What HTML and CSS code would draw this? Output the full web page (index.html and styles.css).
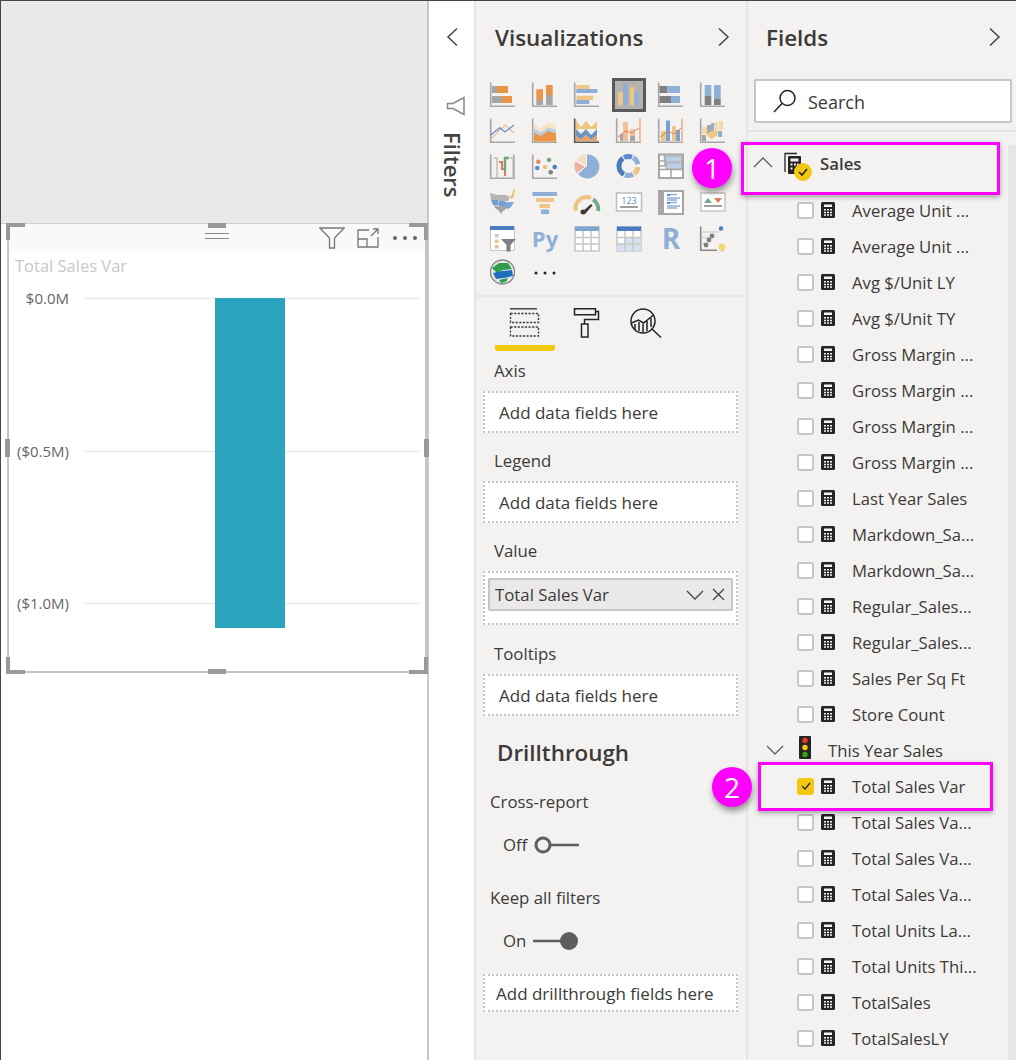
FILE: index.html
```html
<!DOCTYPE html>
<html lang="en">
<head>
    <meta charset="UTF-8">
    <title>Power BI report - Total Sales Var</title>
    <link rel="stylesheet" href="styles.css">
</head>
<body>
    <svg class="defs" width="0" height="0">
        <symbol id="calc" viewBox="0 0 14 16">
            <rect width="14" height="16" rx="1.5" fill="#252423"/>
            <rect x="3" y="2.5" width="8" height="2.5" fill="#f3f2f1"/>
            <path d="M3 7h2v1.5H3zM6 7h2v1.5H6zM9 7h2v1.5H9zM3 9.7h2v1.5H3zM6 9.7h2v1.5H6zM9 9.7h2v1.5H9zM3 12.3h2v1.5H3zM6 12.3h2v1.5H6zM9 12.3h2v1.5H9z" fill="#f3f2f1"/>
        </symbol>
        <symbol id="axis" viewBox="0 0 28 28">
            <path d="M1.7 1.5V25.3H26" fill="none" stroke="#a6a6a6" stroke-width="1.6"/>
        </symbol>
    </svg>

    <div class="page">
        <div class="canvas">
            <div class="canvas-top"></div>
            <div class="visual">
                <div class="visual-head">
                    <svg class="grip" width="24" height="6"><path d="M0 .5h24M0 5.5h24" stroke="#8a8a8a"/></svg>
                    <svg class="head-icon filter-icon" width="26" height="22" viewBox="0 0 26 22"><path d="M1 1h24l-9.500 10v10h-5V11z" fill="none" stroke="#777" stroke-width="1.300"/></svg>
                    <svg class="head-icon expand-icon" width="22" height="20" viewBox="0 0 22 20"><path d="M12 2H1v17h20V9M1 11h9v8M14 8l7-7M16 1h5v5" fill="none" stroke="#777" stroke-width="1.300"/></svg>
                    <span class="head-dots">
                        <i></i><i></i><i></i>
                    </span>
                </div>
                <div class="visual-title">Total Sales Var</div>
                <svg class="chart" width="414" height="390" viewBox="0 0 414 390">
                    <path d="M74 21.500H410M74 174.500H410M74 326.500H410" stroke="#e9e9e9" stroke-width="1.500"/>
                    <rect x="205" y="21" width="70" height="330" fill="#2ba3bf"/>
                    <g class="axis-label">
                        <text x="59" y="27">$0.0M</text>
                        <text x="59" y="180">($0.5M)</text>
                        <text x="59" y="332">($1.0M)</text>
                    </g>
                </svg>
                <i class="handle corner tl"></i>
                <i class="handle corner tr"></i>
                <i class="handle corner bl"></i>
                <i class="handle corner br"></i>
                <i class="handle side top"></i>
                <i class="handle side bottom"></i>
                <i class="handle upright left"></i>
                <i class="handle upright right"></i>
            </div>
        </div>

        <div class="filters">
            <svg class="chev" width="12" height="20" viewBox="0 0 12 20"><path d="M11 1.500 2 10l9 8.500" fill="none" stroke="#444" stroke-width="1.500"/></svg>
            <svg class="megaphone" width="20" height="20" viewBox="0 0 20 20"><path d="M18 1.500V18.500L7 12.500H1.500V7.500H7z" fill="none" stroke="#8a8886" stroke-width="1.500"/></svg>
            <div class="filters-label">Filters</div>
        </div>

        <div class="viz">
            <div class="pane-head">
                <h2 class="pane-title">Visualizations</h2>
                <svg class="chev" width="12" height="20" viewBox="0 0 12 20"><path d="M1 1.500 10 10l-9 8.500" fill="none" stroke="#444" stroke-width="1.500"/></svg>
            </div>

            <div class="viz-grid">
                <!-- row 1 -->
                <svg viewBox="0 0 28 28"><use href="#axis"/><path d="M3 5h5v7H3zM3 15h10v7H3z" fill="#a6a6a6"/><path d="M8 5h11v7H8zM13 15h10v7H13z" fill="#e99546"/></svg>
                <svg viewBox="0 0 28 28"><use href="#axis"/><path d="M5.300 8.300H12V19H5.300zM15 4h6.700v10H15z" fill="#e99546"/><path d="M5.300 19H12v5H5.300zM15 14h6.700v10H15z" fill="#a6a6a6"/></svg>
                <svg viewBox="0 0 28 28"><use href="#axis"/><path d="M3.300 4h13v4h-13zM3.300 14.700h17v4.300h-17z" fill="#eec788"/><path d="M3.300 8h21v4h-21zM3.300 19h13v4h-13z" fill="#8fb0d6"/></svg>
                <svg class="viz-selected" viewBox="0 0 28 28"><path d="M3 10.700h5V24H3zM14.700 6.300h4.600V24h-4.600z" fill="#eec788"/><path d="M8 2.300h5V24H8zM19.300 10.700h4.400V24h-4.400z" fill="#8fb0d6"/></svg>
                <svg viewBox="0 0 28 28"><use href="#axis"/><path d="M2.500 5h8v7h-8zM2.500 15h11.500v7H2.500z" fill="#7f7f7f"/><path d="M10.500 5H23v7H10.500zM14 15h9v7h-9z" fill="#8fb0d6"/></svg>
                <svg viewBox="0 0 28 28"><use href="#axis"/><path d="M5.700 4h6.600v10.700H5.700zM15 4h6.700v14H15z" fill="#8fb0d6"/><path d="M5.700 14.700h6.600V24H5.700zM15 18h6.700v6H15z" fill="#7f7f7f"/></svg>

                <!-- row 2 -->
                <svg viewBox="0 0 28 28"><use href="#axis"/><path d="M2.700 21.300 10.700 13l6-5L25 16.300" fill="none" stroke="#efb79f" stroke-width="1.200"/><path d="M1.700 18l9-7.300L16 15l9-7" fill="none" stroke="#5b8dc8" stroke-width="1.200"/></svg>
                <svg viewBox="0 0 28 28"><use href="#axis"/><path d="M3 7l7 4 7-6 8 3v8H3z" fill="#f6e3c8"/><path d="M3 11.500l7 4 7-5 8 2.500v6H3z" fill="#b9cde3"/><path d="M3 16l7 3 7-5 8 2.500V24.500H3z" fill="#e99546"/></svg>
                <svg viewBox="0 0 28 28"><path d="M1.700 1.500V25.300H26" fill="none" stroke="#555" stroke-width="1.600"/><path d="M3 3l5 7 5-6 5 6 6-6v8H3z" fill="#eec27f"/><path d="M3 12l5 5 5-5 5 6 6-6v6l-6 5-5-5-5 5-5-4z" fill="#6f93bf"/><path d="M3 19l5 4 5-5 5 5 6-5v6H3z" fill="#efa25f"/></svg>
                <svg viewBox="0 0 28 28"><use href="#axis"/><path d="M25 1.500v24" stroke="#efb08a" stroke-width="1.600"/><path d="M5 17h5v7H5zM15 19h5v5h-5z" fill="#a6a6a6"/><path d="M8 5h5v19H8z" fill="#f3bf9a"/><path d="M15 12h5v7h-5z" fill="#f3bf9a"/><path d="M3 20l8-6 6 2 7-5" fill="none" stroke="#e07f5f" stroke-width="1"/></svg>
                <svg viewBox="0 0 28 28"><use href="#axis"/><path d="M25 1.500v24" stroke="#efb08a" stroke-width="1.600"/><path d="M4 14h5v10H4zM15 9h4v15h-4z" fill="#eec788"/><path d="M9 3.500h4V24H9zM19 13h4v11h-4z" fill="#7aa2d2"/><path d="M3 20l8-6 6 3 7-6" fill="none" stroke="#e07f5f" stroke-width="1"/></svg>
                <svg viewBox="0 0 28 28"><use href="#axis"/><path d="M3 10h5v7H3zM15 5h4v8h-4zM20 4h4v9h-4z" fill="#f4d8ae"/><path d="M8 8h4v9H8zM3 18h4v6H3z" fill="#a6a6a6"/><path d="M12 6h3v8h-3zM19 14h4v6h-4z" fill="#8fb0d6"/><path d="M7 17l5 5 6-3 1-6-7 1z" fill="#eec788"/></svg>

                <!-- row 3 -->
                <svg viewBox="0 0 28 28"><use href="#axis"/><path d="M25 1.500v24" stroke="#a6a6a6" stroke-width="1.600"/><path d="M5 5h3v19M21 5h3v19" fill="none" stroke="#bdbdbd" stroke-width="1.500"/><path d="M10 9h3v7h3v7" fill="none" stroke="#e0765a" stroke-width="2"/><path d="M16 18v-13h4" fill="none" stroke="#6fa878" stroke-width="2.500"/></svg>
                <svg viewBox="0 0 28 28"><use href="#axis"/><circle cx="7.300" cy="8.700" r="2.300" fill="#e0876f"/><circle cx="18" cy="7" r="2.300" fill="#71a98d"/><circle cx="14" cy="14" r="2.300" fill="#eec27f"/><circle cx="6.300" cy="15" r="2.300" fill="#5b8dc8"/><circle cx="23.700" cy="14" r="2.300" fill="#4a7dbd"/><circle cx="19.700" cy="19.300" r="2.300" fill="#7f7f7f"/></svg>
                <svg viewBox="0 0 28 28"><path d="M14 13V1.500A12 12 0 1 1 5 21z" fill="#8fb0d6"/><path d="M13 12V1.500A12 12 0 0 0 3 7z" fill="#f3dfc0"/><path d="M12 14 2.500 8.500A12 12 0 0 0 3.500 20z" fill="#efb0a0"/></svg>
                <svg viewBox="0 0 28 28"><g fill="none" stroke-width="5"><circle cx="13.500" cy="13" r="9.500" stroke="#f3f2f1"/><circle cx="13.500" cy="13" r="9.500" pathLength="100" stroke="#eec27f" stroke-dasharray="13 87" stroke-dashoffset="-2"/><circle cx="13.500" cy="13" r="9.500" pathLength="100" stroke="#8fb0d6" stroke-dasharray="14 86" stroke-dashoffset="-17"/><circle cx="13.500" cy="13" r="9.500" pathLength="100" stroke="#4a7dbd" stroke-dasharray="32 68" stroke-dashoffset="-33"/><circle cx="13.500" cy="13" r="9.500" pathLength="100" stroke="#5b8dc8" stroke-dasharray="14 86" stroke-dashoffset="-67"/><circle cx="13.500" cy="13" r="9.500" pathLength="100" stroke="#8fb0d6" stroke-dasharray="14 86" stroke-dashoffset="-83"/></g></svg>
                <svg viewBox="0 0 28 28"><rect x="2" y="1.500" width="24" height="23.500" fill="#fff" stroke="#a6a6a6" stroke-width="2"/><path d="M7.500 2v6M2 8h6v5H2zM2 16.500h24M14 17v8" fill="none" stroke="#a6a6a6" stroke-width="1.500"/><path d="M9 3h16v6H9zM9 10h16v6H9z" fill="#bcd0e8" stroke="#a6a6a6"/></svg>
                <svg viewBox="0 0 28 28"></svg>

                <!-- row 4 -->
                <svg viewBox="0 0 28 28"><path d="M1 4l8 2h8l4 2-2 4H2z" fill="#b5b5b5"/><path d="M21 7l2-1 1-5 2-1-1 8-3 2z" fill="#eec27f"/><path d="M2 11h7l1 5H4zM10 12h6v5h-6z" fill="#6f9dd0"/><path d="M16 13h9l-3 5-3 2-3-1z" fill="#7fa8d6"/><path d="M5 16l5 1h6l1 3-3 2-2 3-3-4-3-2z" fill="#a6a6a6"/></svg>
                <svg viewBox="0 0 28 28"><path d="M1.500 3H26v4H1.500z" fill="#8fb0d6"/><path d="M5 9h18v4H5z" fill="#eec788"/><path d="M8.500 15H19v4H8.500z" fill="#eec788"/><path d="M10 20.500h8V25h-8z" fill="#8fb0d6"/></svg>
                <svg viewBox="0 0 28 28"><path d="M3 22A11 11 0 0 1 18 9" fill="none" stroke="#eec27f" stroke-width="4"/><path d="M20 10.500A11 11 0 0 1 25 22" fill="none" stroke="#6fa88f" stroke-width="4"/><path d="M9 23l9-8 1.500 1.500L12 25z" fill="#3b3a39"/><circle cx="10" cy="23" r="2.500" fill="#3b3a39"/></svg>
                <svg viewBox="0 0 28 28"><rect x="1.500" y="4" width="25" height="18" fill="#fff" stroke="#bdbdbd" stroke-width="1.500"/><text class="icon-card" x="14" y="14.500">123</text><path d="M5 18h18" stroke="#7f7f7f" stroke-width="1.500"/></svg>
                <svg viewBox="0 0 28 28"><rect x="2" y="2" width="24" height="23" fill="#fff" stroke="#a6a6a6" stroke-width="2"/><path d="M3 3h4v21H3z" fill="#a6a6a6"/><path d="M10 5h3v2h-3zM10 13h3v2h-3z" fill="#5b8dc8"/><path d="M13 5.500h7M10 9h13M10 11h10M13 13.500h7M10 17h13M10 19h10" stroke="#8fb0d6" stroke-width="1.300"/></svg>
                <svg viewBox="0 0 28 28"><rect x="2" y="4" width="24" height="18" fill="#fff" stroke="#c8c6c4" stroke-width="1.500"/><path d="M5 14l4-5 4 5z" fill="#6fa88f"/><path d="M15 9h8l-4 5z" fill="#e0765a"/><path d="M5 17h18" stroke="#7f7f7f" stroke-width="1.500"/></svg>

                <!-- row 5 -->
                <svg viewBox="0 0 28 28"><path d="M1.500 1.500h24v24h-24z" fill="#fff" stroke="#c8c6c4" stroke-width="1"/><path d="M1 1h24v4H1z" fill="#4a7dbd"/><path d="M6 9h3.500v3.500H6z" fill="#b9cde3"/><path d="M6 14.500h3.500V18H6z" fill="#eec27f"/><path d="M6 20h3.500v3.500H6z" fill="#efb8a8"/><path d="M12 14h15l-5.500 6v6.500h-4V20z" fill="#7f7f7f"/></svg>
                <svg viewBox="0 0 28 28"><text class="icon-letter py" x="14" y="22">Py</text></svg>
                <svg viewBox="0 0 28 28"><rect x="2" y="2" width="24" height="24" fill="#fff" stroke="#c8c6c4" stroke-width="1.500"/><path d="M2 1.500h24V6H2z" fill="#7ba3d0"/><path d="M10 6v20M18 6v20M2 12.500h24M2 19h24" stroke="#c8c6c4" stroke-width="1.500"/></svg>
                <svg viewBox="0 0 28 28"><rect x="2" y="2" width="24" height="24" fill="#fff" stroke="#c8c6c4" stroke-width="1.500"/><path d="M2 1.500h24V6H2z" fill="#4a7dbd"/><path d="M10 13h16v13H10zM2 19h8v7H2z" fill="#d5e2f0"/><path d="M10 6v20M18 6v20M2 12.500h24M2 19h24" stroke="#c8c6c4" stroke-width="1.500"/></svg>
                <svg viewBox="0 0 28 28"><text class="icon-letter r" x="14" y="24">R</text></svg>
                <svg viewBox="0 0 28 28"><path d="M1.700 1.500V25.300H18" fill="none" stroke="#8a8886" stroke-width="1.600"/><path d="M2 7h18M2 13h10M2 19h7" stroke="#c8c6c4"/><circle cx="22" cy="3.500" r="2.200" fill="#4a7dbd"/><circle cx="13" cy="11" r="2.400" fill="#7f7f7f"/><circle cx="10" cy="15" r="2.400" fill="#7f7f7f"/><circle cx="7" cy="20" r="2.400" fill="#7f7f7f"/><circle cx="23" cy="22" r="3.500" fill="#f6d67a"/><path d="M21.500 26h3" stroke="#c8c6c4" stroke-width="1.500"/></svg>

                <!-- row 6 -->
                <svg class="viz-last" viewBox="0 0 28 28"><circle cx="13.500" cy="13" r="12" fill="#e9e9e9" stroke="#8a8886" stroke-width="1.300"/><path d="M3 9l7-5 9 0 4 6-9 1-6 3z" fill="#2f9e4f"/><path d="M4 14l9-2 10-1 1 6-9 2-8 1z" fill="#1f6fc0"/><path d="M10 21l9-2-2 4-5 1z" fill="#2f9e4f"/></svg>
                <svg class="viz-last" viewBox="0 0 28 28"><g fill="#252423"><circle cx="5" cy="14" r="1.500"/><circle cx="14" cy="14" r="1.500"/><circle cx="23" cy="14" r="1.500"/></g></svg>
            </div>

            <div class="tabs">
                <div class="tab tab-active">
                    <svg width="32" height="30" viewBox="0 0 32 30"><path d="M1 .8h27" stroke="#3b3a39" stroke-width="1.400"/><path d="M1.500 5.500h28v9h-28zM1.500 19h28v9h-28z" fill="none" stroke="#3b3a39" stroke-width="1.400" stroke-dasharray="2.200 1.400"/></svg>
                </div>
                <div class="tab">
                    <svg width="28" height="30" viewBox="0 0 28 30"><path d="M2.500.8h21v6h-21zM23.500 3.500h3v8H12.500V16M9.500 16h6.500v13H9.500z" fill="none" stroke="#252423" stroke-width="1.500"/></svg>
                </div>
                <div class="tab tab-analytics">
                    <svg width="32" height="30" viewBox="0 0 32 30"><circle cx="13" cy="13" r="12" fill="none" stroke="#252423" stroke-width="1.500"/><path d="M1.500 15l7-3 5 3 10-8" fill="none" stroke="#252423" stroke-width="1.500"/><path d="M5 16v6M9 14v9M13 16v8M17 13v10M21 10v9M22 21l9 8.500" fill="none" stroke="#252423" stroke-width="1.500"/></svg>
                </div>
            </div>

            <div class="well-group well-first">
                <div class="well-label">Axis</div>
                <div class="well">Add data fields here</div>
            </div>
            <div class="well-group">
                <div class="well-label">Legend</div>
                <div class="well">Add data fields here</div>
            </div>
            <div class="well-group">
                <div class="well-label">Value</div>
                <div class="well well-filled">
                    <div class="chip">
                        <span class="chip-name">Total Sales Var</span>
                        <svg width="18" height="10" viewBox="0 0 18 10"><path d="M1 1l8 8 8-8" fill="none" stroke="#444" stroke-width="1.300"/></svg>
                        <svg width="13" height="13" viewBox="0 0 13 13"><path d="M1 1l11 11M12 1 1 12" fill="none" stroke="#444" stroke-width="1.300"/></svg>
                    </div>
                </div>
            </div>
            <div class="well-group well-tooltips">
                <div class="well-label">Tooltips</div>
                <div class="well">Add data fields here</div>
            </div>

            <h2 class="pane-title drill-title">Drillthrough</h2>
            <div class="drill-label">Cross-report</div>
            <div class="toggle-row">
                <span>Off</span>
                <svg class="toggle-off" width="45" height="18" viewBox="0 0 45 18"><circle cx="9" cy="9" r="7" fill="none" stroke="#605e5c" stroke-width="3"/><path d="M17 9h28" stroke="#605e5c" stroke-width="2.500"/></svg>
            </div>
            <div class="drill-label keep-label">Keep all filters</div>
            <div class="toggle-row">
                <span>On</span>
                <svg class="toggle-on" width="46" height="18" viewBox="0 0 46 18"><path d="M0 9h30" stroke="#605e5c" stroke-width="2.500"/><circle cx="36" cy="9" r="9" fill="#605e5c"/></svg>
            </div>
            <div class="well well-drill">Add drillthrough fields here</div>
        </div>

        <div class="fields">
            <div class="pane-head fields-head">
                <h2 class="pane-title">Fields</h2>
                <svg class="chev" width="12" height="20" viewBox="0 0 12 20"><path d="M1 1.500 10 10l-9 8.500" fill="none" stroke="#444" stroke-width="1.500"/></svg>
            </div>
            <div class="search">
                <svg width="24" height="24" viewBox="0 0 24 24"><circle cx="14.500" cy="9" r="7.500" fill="none" stroke="#252423" stroke-width="1.500"/><path d="M9 14.500 1 23" stroke="#252423" stroke-width="1.500"/></svg>
                <span class="search-text">Search</span>
            </div>

            <div class="field-list">
                <div class="table-row">
                    <svg width="20" height="12" viewBox="0 0 20 12"><path d="M1 11 10 2l9 9" fill="none" stroke="#605e5c" stroke-width="1.300"/></svg>
                    <span class="table-icon">
                        <svg width="20" height="24" viewBox="0 0 20 24"><path d="M1 20V1.500h12" fill="none" stroke="#252423" stroke-width="1.300"/><rect x="4" y="4" width="13" height="18" rx="1" fill="#252423"/><rect x="6.500" y="6.500" width="8" height="3" fill="#f3f2f1"/><path d="M6.500 11.500h2v2h-2zM10 11.500h2v2h-2zM13 11.500h1.500v2H13zM6.500 15.500h2v2h-2z" fill="#f3f2f1"/></svg>
                        <span class="table-check">
                            <svg width="10" height="8" viewBox="0 0 10 8"><path d="M1 4l3 3 5-6" fill="none" stroke="#252423" stroke-width="1.600"/></svg>
                        </span>
                    </span>
                    <strong>Sales</strong>
                </div>

                <div class="field"><i class="box"></i><svg class="calc"><use href="#calc"/></svg><span>Average Unit ...</span></div>
                <div class="field"><i class="box"></i><svg class="calc"><use href="#calc"/></svg><span>Average Unit ...</span></div>
                <div class="field"><i class="box"></i><svg class="calc"><use href="#calc"/></svg><span>Avg $/Unit LY</span></div>
                <div class="field"><i class="box"></i><svg class="calc"><use href="#calc"/></svg><span>Avg $/Unit TY</span></div>
                <div class="field"><i class="box"></i><svg class="calc"><use href="#calc"/></svg><span>Gross Margin ...</span></div>
                <div class="field"><i class="box"></i><svg class="calc"><use href="#calc"/></svg><span>Gross Margin ...</span></div>
                <div class="field"><i class="box"></i><svg class="calc"><use href="#calc"/></svg><span>Gross Margin ...</span></div>
                <div class="field"><i class="box"></i><svg class="calc"><use href="#calc"/></svg><span>Gross Margin ...</span></div>
                <div class="field"><i class="box"></i><svg class="calc"><use href="#calc"/></svg><span>Last Year Sales</span></div>
                <div class="field"><i class="box"></i><svg class="calc"><use href="#calc"/></svg><span>Markdown_Sa...</span></div>
                <div class="field"><i class="box"></i><svg class="calc"><use href="#calc"/></svg><span>Markdown_Sa...</span></div>
                <div class="field"><i class="box"></i><svg class="calc"><use href="#calc"/></svg><span>Regular_Sales...</span></div>
                <div class="field"><i class="box"></i><svg class="calc"><use href="#calc"/></svg><span>Regular_Sales...</span></div>
                <div class="field"><i class="box"></i><svg class="calc"><use href="#calc"/></svg><span>Sales Per Sq Ft</span></div>
                <div class="field"><i class="box"></i><svg class="calc"><use href="#calc"/></svg><span>Store Count</span></div>

                <div class="folder-row">
                    <svg width="18" height="10" viewBox="0 0 18 10"><path d="M1 1l8 8 8-8" fill="none" stroke="#605e5c" stroke-width="1.300"/></svg>
                    <svg class="light" width="12" height="23" viewBox="0 0 12 23"><rect width="12" height="23" rx="1" fill="#252423"/><circle cx="6" cy="4.500" r="2.700" fill="#e8391d"/><circle cx="6" cy="11.500" r="2.700" fill="#f2c811"/><circle cx="6" cy="18.500" r="2.700" fill="#37a20f"/></svg>
                    <span>This Year Sales</span>
                </div>

                <div class="field"><i class="box box-on"><svg width="10" height="8" viewBox="0 0 10 8"><path d="M1 4l3 3 5-6" fill="none" stroke="#252423" stroke-width="1.200"/></svg></i><svg class="calc"><use href="#calc"/></svg><span>Total Sales Var</span></div>
                <div class="field"><i class="box"></i><svg class="calc"><use href="#calc"/></svg><span>Total Sales Va...</span></div>
                <div class="field"><i class="box"></i><svg class="calc"><use href="#calc"/></svg><span>Total Sales Va...</span></div>
                <div class="field"><i class="box"></i><svg class="calc"><use href="#calc"/></svg><span>Total Sales Va...</span></div>
                <div class="field"><i class="box"></i><svg class="calc"><use href="#calc"/></svg><span>Total Units La...</span></div>
                <div class="field"><i class="box"></i><svg class="calc"><use href="#calc"/></svg><span>Total Units Thi...</span></div>
                <div class="field"><i class="box"></i><svg class="calc"><use href="#calc"/></svg><span>TotalSales</span></div>
                <div class="field"><i class="box"></i><svg class="calc"><use href="#calc"/></svg><span>TotalSalesLY</span></div>
            </div>
            <div class="scroll-thumb"></div>
        </div>

        <!-- callouts drawn over the panes -->
        <div class="callout-box box-one"></div>
        <div class="callout-box box-two"></div>
        <div class="badge badge-one">1</div>
        <div class="badge badge-two">2</div>
    </div>
</body>
</html>
```

FILE: styles.css
```css
body {
    margin: 0;
    font-family: "Open Sans", "Noto Sans", sans-serif;
    color: #3b3a39;
}
.defs {
    position: absolute;
}
.page {
    position: relative;
    display: flex;
    width: 1016px;
    height: 1060px;
    box-sizing: border-box;
    overflow: hidden;
    border-top: 1px solid #444;
    background-color: #f3f2f1;
}

/* report canvas */
.canvas {
    width: 429px;
    flex: none;
    box-sizing: border-box;
    background-color: #fff;
    border-left: 1px solid #444;
    border-right: 2px solid #c8c8c8;
}
.canvas-top {
    height: 222px;
    background-color: #e9e9e9;
    border-bottom: 1px solid #cfcfcf;
}
.visual {
    position: relative;
    width: 420px;
    height: 449px;
    box-sizing: border-box;
    margin-left: 6px;
    background-color: #fff;
    border: 2px solid #c4c4c4;
    border-top: none;
}
.visual-head {
    position: relative;
    display: flex;
    align-items: center;
    justify-content: flex-end;
    height: 28px;
    padding-right: 8px;
    background-color: #f9f9f9;
}
.grip {
    position: absolute;
    left: 196px;
    top: 9px;
}
.head-icon {
    margin-right: 12px;
}
.head-dots {
    display: flex;
    gap: 6px;
    margin-left: 2px;
}
.head-dots i {
    width: 4px;
    height: 4px;
    border-radius: 50%;
    background-color: #666;
}
.visual-title {
    padding-left: 6px;
    height: 27px;
    line-height: 27px;
    font-size: 16.500px;
    color: #c8c8c8;
}
.chart {
    display: block;
    margin-top: -2px;
    margin-left: 1px;
}
.axis-label text {
    font-size: 15px;
    fill: #666;
    text-anchor: end;
}
.handle {
    position: absolute;
    background-color: #999;
}
.corner {
    width: 15px;
    height: 13px;
    background-color: transparent;
    border: 0 solid #999;
}
.tl { left: -3px; top: -1px; border-width: 4px 0 0 4px; }
.tr { right: -3px; top: -1px; border-width: 4px 4px 0 0; }
.bl { left: -3px; bottom: -3px; border-width: 0 0 4px 4px; }
.br { right: -3px; bottom: -3px; border-width: 0 4px 4px 0; }
.side {
    left: 199px;
    width: 18px;
    height: 5px;
}
.top { top: -1px; }
.bottom { bottom: -3px; }
.upright {
    top: 215px;
    width: 5px;
    height: 18px;
}
.left { left: -4px; }
.right { right: -4px; }

/* collapsed filters strip */
.filters {
    width: 47px;
    flex: none;
    box-sizing: border-box;
    background-color: #fff;
    border-right: 2px solid #e6e6e6;
    display: flex;
    flex-direction: column;
    align-items: center;
}
.filters .chev {
    margin-top: 26px;
}
.megaphone {
    margin-top: 49px;
    margin-left: 8px;
}
.filters-label {
    margin-top: 16px;
    margin-left: 3px;
    writing-mode: vertical-rl;
    font-size: 22px;
    font-weight: 600;
    color: #444;
}

/* visualizations pane */
.viz {
    width: 272px;
    flex: none;
    box-sizing: border-box;
    border-right: 2px solid #e6e6e6;
}
.pane-head {
    display: flex;
    align-items: center;
    justify-content: space-between;
    height: 76px;
    box-sizing: border-box;
    padding: 0 16px 4px 19px;
}
.pane-title {
    margin: 0;
    font-size: 22.400px;
    font-weight: 600;
    color: #3b3a39;
}
.viz-grid {
    display: grid;
    grid-template-columns: repeat(6, 42px);
    grid-auto-rows: 36px;
    padding-left: 6px;
    height: 218px;
    border-bottom: 2px solid #e6e6e6;
    box-sizing: content-box;
}
.viz-grid svg {
    width: 28px;
    height: 28px;
    margin: 4px 7px;
    overflow: visible;
}
.viz-selected {
    background-color: #b5b2af;
    outline: 3px solid #5a5a5a;
}
.viz-grid .viz-last {
    margin-top: 2px;
}
.icon-card {
    font-size: 9px;
    fill: #5b8dc8;
    text-anchor: middle;
}
.icon-letter {
    font-weight: 700;
    fill: #8fb0d6;
    text-anchor: middle;
}
.py {
    font-size: 22px;
}
.r {
    font-size: 28px;
}
.tabs {
    display: flex;
    height: 54px;
    padding-left: 19px;
    gap: 17px;
}
.tab {
    padding: 11px 0 0;
    box-sizing: border-box;
    height: 54px;
}
.tab-active {
    width: 60px;
    display: flex;
    justify-content: center;
    border-bottom: 6px solid #f2c811;
    border-radius: 0 0 3px 3px;
}
.tab-analytics {
    margin-left: 13px;
}
.well-group {
    margin-top: 15px;
}
.well-first {
    margin-top: 7px;
}
.well-tooltips {
    margin-top: 16px;
}
.well-label {
    height: 25px;
    line-height: 25px;
    margin-left: 18px;
    margin-bottom: 8px;
    font-size: 16.800px;
}
.well {
    height: 42px;
    box-sizing: border-box;
    margin-left: 7px;
    width: 255px;
    padding-left: 14px;
    line-height: 40px;
    font-size: 17px;
    background-color: #fff;
    border: 2px dotted #c8c6c4;
}
.well-filled {
    height: 54px;
    padding: 5px 3px;
}
.chip {
    display: flex;
    align-items: center;
    gap: 8px;
    height: 33px;
    box-sizing: border-box;
    padding: 0 6px 0 5px;
    background-color: #ebe9e8;
    border: 2px solid #c8c6c4;
    border-radius: 2px;
    font-size: 16.800px;
    line-height: 28px;
}
.chip-name {
    flex: 1;
}
.drill-title {
    margin: 20px 0 0 21px;
    height: 34px;
    line-height: 34px;
}
.drill-label {
    margin: 19px 0 0 14px;
    height: 25px;
    line-height: 25px;
    font-size: 16.800px;
}
.keep-label {
    margin-top: 28px;
}
.toggle-row {
    display: flex;
    align-items: center;
    gap: 4px;
    margin: 18px 0 0 27px;
    height: 25px;
    font-size: 16.800px;
}
.toggle-row span {
    min-width: 28px;
}
.toggle-off {
    margin-left: -1px;
}
.toggle-on {
    margin-left: -2px;
}
.well-drill {
    margin-top: 21px;
    height: 38px;
    padding-left: 11px;
    line-height: 35px;
}

/* fields pane */
.fields {
    position: relative;
    flex: 1;
}
.fields-head {
    padding-left: 18px;
    padding-right: 15px;
    height: 78px;
    padding-bottom: 6px;
}
.search {
    display: flex;
    align-items: center;
    gap: 11px;
    width: 258px;
    height: 44px;
    box-sizing: border-box;
    margin-left: 6px;
    padding-left: 17px;
    font-size: 18px;
    background-color: #fff;
    border: 2px solid #c8c6c4;
    border-radius: 2px;
}
.search-text {
    margin-top: 1px;
}
.field-list {
    margin-top: 7px;
    border-top: 2px solid #e6e6e6;
    height: 1000px;
}
.table-row {
    display: flex;
    align-items: center;
    height: 60px;
    padding-bottom: 2px;
    box-sizing: border-box;
    padding-left: 5px;
}
.table-row > svg {
    margin-top: 2px;
}
.table-row strong {
    font-size: 16.800px;
    font-weight: 600;
    margin-left: 16px;
    margin-top: 4px;
}
.table-icon {
    position: relative;
    display: block;
    width: 20px;
    height: 24px;
    margin-left: 11px;
    margin-top: 6px;
}
.table-check {
    position: absolute;
    left: 10px;
    top: 11px;
    width: 18px;
    height: 18px;
    display: flex;
    align-items: center;
    justify-content: center;
    border-radius: 50%;
    background-color: #f2c811;
}
.field {
    display: flex;
    align-items: center;
    height: 36px;
    padding-left: 49px;
    font-size: 16.700px;
}
.box {
    display: flex;
    align-items: center;
    justify-content: center;
    width: 17px;
    height: 17px;
    box-sizing: border-box;
    background-color: #fff;
    border: 2px solid #c8c6c4;
    border-radius: 3px;
}
.box-on {
    background-color: #f2c811;
    border-color: #f2c811;
}
.calc {
    width: 14px;
    height: 16px;
    margin: 0 17px 0 7px;
}
.folder-row {
    display: flex;
    align-items: center;
    height: 36px;
    padding-left: 18px;
    font-size: 16.700px;
}
.light {
    margin: -6px 17px 0 15px;
}
.scroll-thumb {
    position: absolute;
    right: 0;
    top: 144px;
    bottom: 0;
    width: 8px;
    background-color: #e6e6e6;
}

/* numbered callouts */
.callout-box {
    position: absolute;
    box-sizing: border-box;
    border: 3px solid #f0f;
    box-shadow: 0 2px 5px rgba(0, 0, 0, 0.35);
}
.box-one {
    left: 741px;
    top: 141px;
    width: 259px;
    height: 53px;
}
.box-two {
    left: 758px;
    top: 761px;
    width: 235px;
    height: 49px;
}
.badge {
    position: absolute;
    width: 40px;
    height: 40px;
    border-radius: 50%;
    background-color: #f0f;
    color: #fff;
    font-size: 28px;
    line-height: 40px;
    text-align: center;
    box-shadow: 1px 4px 6px rgba(0, 0, 0, 0.4);
}
.badge-one {
    left: 692px;
    top: 147px;
}
.badge-two {
    left: 712px;
    top: 766px;
}
```
